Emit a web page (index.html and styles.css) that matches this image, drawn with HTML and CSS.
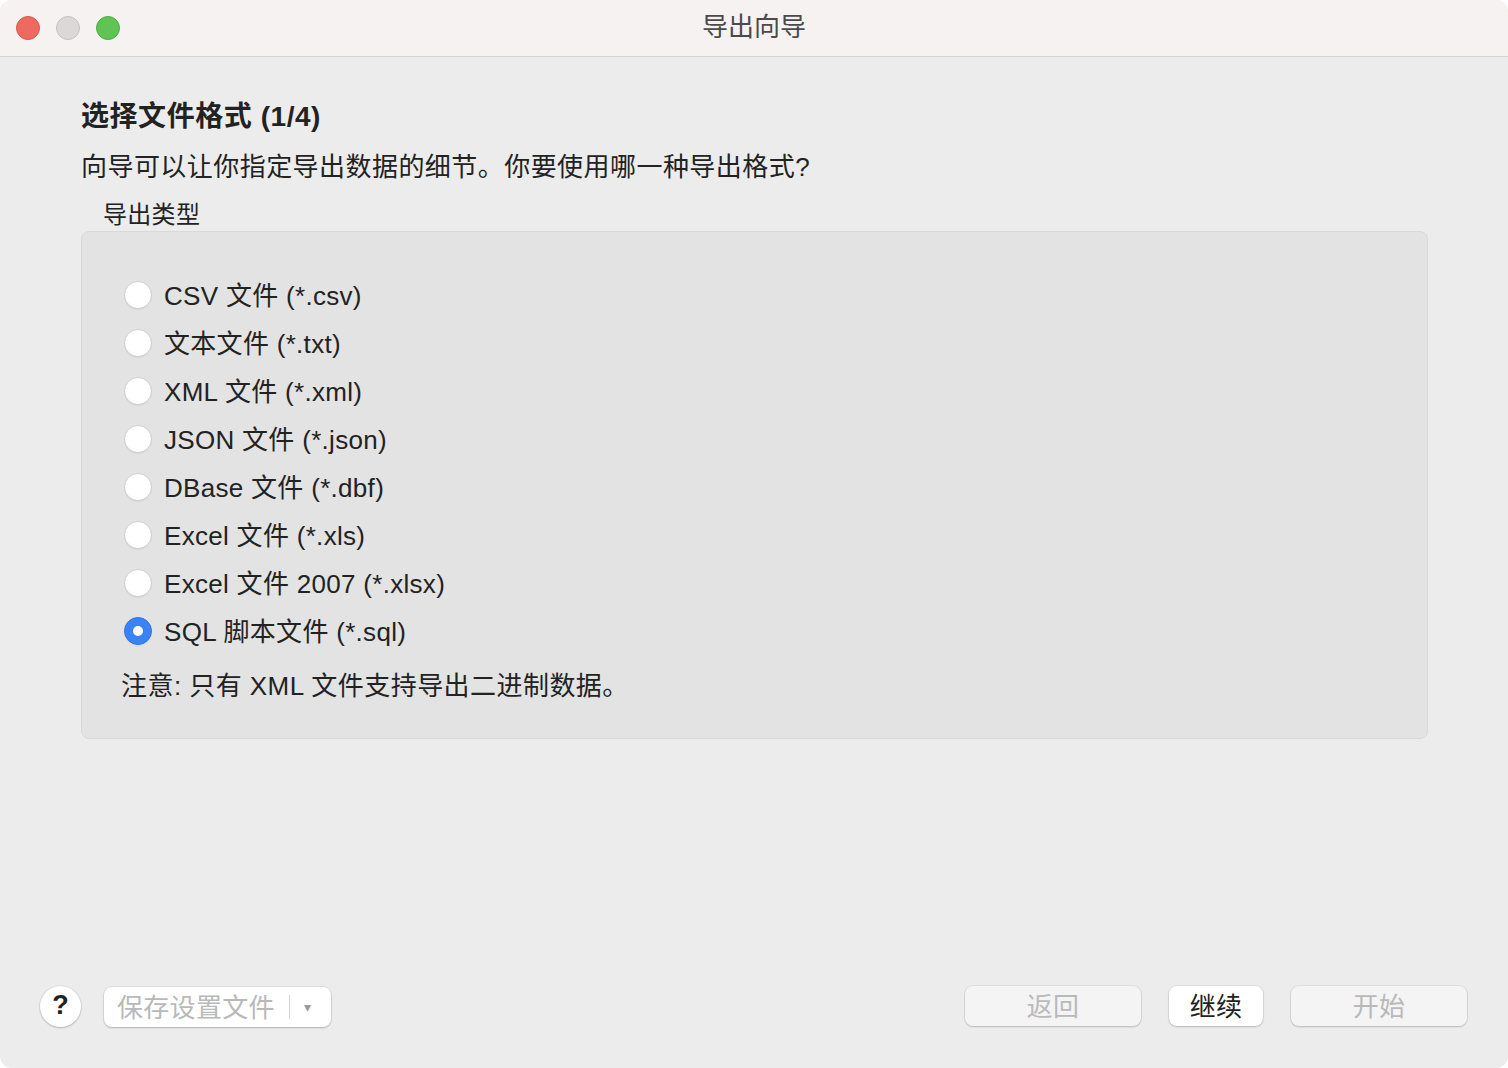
FILE: index.html
```html
<!DOCTYPE html>
<html lang="zh">
<head>
    <meta charset="UTF-8">
    <title>导出向导</title>
    <link rel="stylesheet" href="styles.css">
</head>
<body>
    <div class="window">
        <div class="titlebar">
            <div class="lights">
                <span class="light red"></span>
                <span class="light gray"></span>
                <span class="light green"></span>
            </div>
            <div class="title">导出向导</div>
        </div>

        <div class="content">
            <h2 class="heading">选择文件格式 (1/4)</h2>
            <p class="desc">向导可以让你指定导出数据的细节。你要使用哪一种导出格式?</p>
            <div class="group-label">导出类型</div>
            <div class="group">
                <label class="option"><span class="radio"></span>CSV 文件 (*.csv)</label>
                <label class="option"><span class="radio"></span>文本文件 (*.txt)</label>
                <label class="option"><span class="radio"></span>XML 文件 (*.xml)</label>
                <label class="option"><span class="radio"></span>JSON 文件 (*.json)</label>
                <label class="option"><span class="radio"></span>DBase 文件 (*.dbf)</label>
                <label class="option"><span class="radio"></span>Excel 文件 (*.xls)</label>
                <label class="option"><span class="radio"></span>Excel 文件 2007 (*.xlsx)</label>
                <label class="option"><span class="radio checked"></span>SQL 脚本文件 (*.sql)</label>
                <p class="note">注意: 只有 XML 文件支持导出二进制数据。</p>
            </div>
        </div>

        <div class="footer">
            <div class="footer-left">
                <button class="help">?</button>
                <button class="save">保存设置文件<span class="sep"></span><span class="caret">▾</span></button>
            </div>
            <div class="footer-right">
                <button class="btn wide disabled">返回</button>
                <button class="btn primary">继续</button>
                <button class="btn wide disabled">开始</button>
            </div>
        </div>
    </div>
</body>
</html>
```

FILE: styles.css
```css
html, body { margin: 0; padding: 0; background: #ffffff; }
body { font-family: "Liberation Sans", "Noto Sans CJK SC", sans-serif; color: #222; }
.window { width: 1508px; height: 1068px; background: #ececec; border-radius: 12px; overflow: hidden; display: flex; flex-direction: column; }

.titlebar { height: 56px; background: #f6f2f2; border-bottom: 1px solid #d6d2d2; display: flex; align-items: center; position: relative; flex-shrink: 0; }
.lights { display: flex; gap: 16px; padding-left: 16px; }
.light { width: 24px; height: 24px; border-radius: 50%; box-sizing: border-box; }
.red { background: #ee6a5e; border: 1px solid #d9574c; }
.gray { background: #dcd8d8; border: 1px solid #c7c2c2; }
.green { background: #5fc454; border: 1px solid #4dae43; }
.title { position: absolute; left: 0; right: 0; top: 12px; text-align: center; font-size: 26px; line-height: 30px; color: #4a4a4a; }

.content { padding: 43px 80px 0 81px; }
.heading { margin: 0; font-size: 28px; line-height: 34px; font-weight: bold; color: #222; letter-spacing: 0.55px; }
.desc { margin: 16px 0 0; font-size: 26px; line-height: 34px; color: #222; letter-spacing: 0.45px; }
.group-label { margin: 16px 0 0 22px; font-size: 24px; line-height: 30px; color: #222; letter-spacing: 0.3px; }
.group { margin-top: 1px; height: 508px; box-sizing: border-box; padding: 39px 0 0 42px; background: #e3e3e3; border: 1px solid #d9d9d9; border-radius: 8px; display: flex; flex-direction: column; }
.option { display: flex; align-items: center; height: 48px; box-sizing: border-box; padding-bottom: 4px; font-size: 26px; color: #222; letter-spacing: 0.3px; }
.radio { width: 28px; height: 28px; margin-top: 4px; border-radius: 50%; background: #fff; border: 1px solid #cfcfcf; box-sizing: border-box; margin-right: 12px; box-shadow: 0 1px 1px rgba(0,0,0,0.05); position: relative; flex-shrink: 0; }
.radio.checked { background: #3a82f6; border-color: #2f74e6; }
.radio.checked::after { content: ""; position: absolute; left: 8px; top: 8px; width: 10px; height: 10px; border-radius: 50%; background: #fff; }
.note { margin: 14px 0 0 -3px; font-size: 26px; line-height: 34px; color: #222; letter-spacing: 0.45px; }

.footer { margin-top: auto; padding: 0 41px 41px 40px; display: flex; justify-content: space-between; align-items: center; }
.footer-left, .footer-right { display: flex; align-items: center; }
.footer-left { gap: 23px; }
.footer-right { gap: 28px; }
button { font-family: inherit; cursor: default; box-sizing: border-box; }
.help { width: 41px; height: 41px; border-radius: 50%; background: #fff; border: none; box-shadow: 0 0 0 1px rgba(0,0,0,0.06), 0 1px 2px rgba(0,0,0,0.2); font-size: 27px; font-weight: bold; color: #222; padding: 0 0 2px; }
.save { height: 40px; width: 227px; margin-top: 2px; background: #fff; border: none; border-radius: 8px; box-shadow: 0 0 0 1px rgba(0,0,0,0.06), 0 1px 2px rgba(0,0,0,0.2); font-size: 26px; color: #b9b9b9; display: flex; align-items: center; padding: 0 0 4px 13px; letter-spacing: 0.3px; }
.sep { width: 1px; height: 24px; margin: 4px 14px 0 14px; background: #d6d6d6; }
.caret { font-size: 14px; color: #999; margin-top: 4px; }
.btn { height: 40px; border-radius: 8px; border: none; font-size: 26px; padding: 0 0 4px; letter-spacing: 0.3px; box-shadow: 0 0 0 1px rgba(0,0,0,0.05), 0 1px 2px rgba(0,0,0,0.18); }
.wide { width: 176px; }
.disabled { background: #f4f4f4; color: #b9b9b9; }
.primary { width: 94px; background: #fff; color: #222; }
```
